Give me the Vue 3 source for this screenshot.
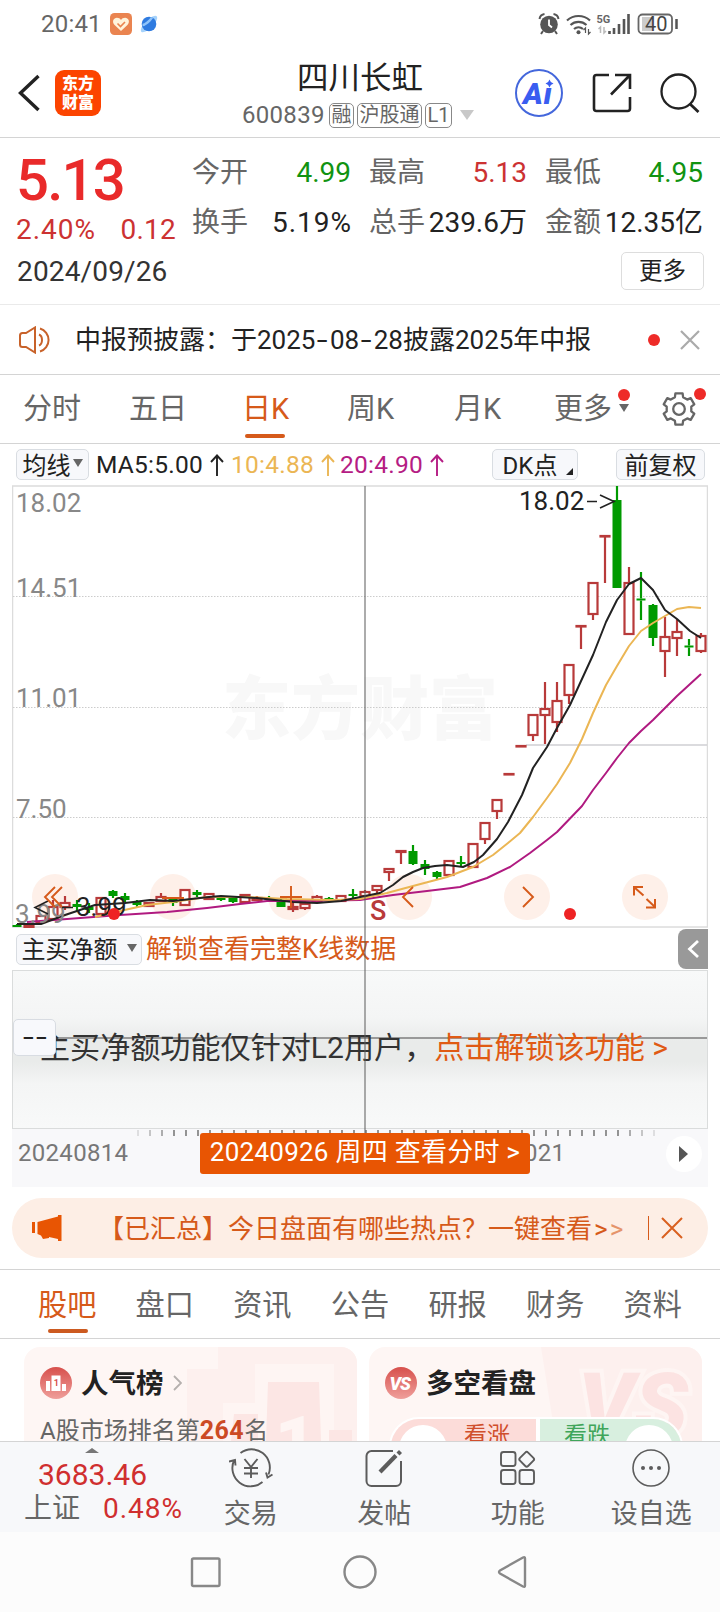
<script setup>
import { ref } from 'vue'

const quotes = [
  { label: '今开', value: '4.99', tone: 'down' },
  { label: '最高', value: '5.13', tone: 'up' },
  { label: '最低', value: '4.95', tone: 'down' },
  { label: '换手', value: '5.19%', tone: 'wide' },
  { label: '总手', value: '239.6万', tone: '' },
  { label: '金额', value: '12.35亿', tone: '' }
]

const averages = [
  { name: 'ma-5', text: 'MA5:5.00' },
  { name: 'ma-10', text: '10:4.88' },
  { name: 'ma-20', text: '20:4.90' }
]

const periods = ['分时', '五日', '日K', '周K', '月K']
const activePeriod = ref('日K')

const sections = ['股吧', '盘口', '资讯', '公告', '研报', '财务', '资料']
const activeSection = ref('股吧')

// x, high, body top, body bottom, low, direction (1 up, 0 down)
const candles = [
  [17, 924, 925, 927, 927, 0], [29, 923, 925, 927, 927, 1], [41, 915, 916, 922, 922, 1],
  [53, 900, 907, 919, 919, 1], [65, 896, 903, 907, 910, 1], [77, 900, 904, 907, 911, 0],
  [89, 903, 907, 910, 913, 0], [101, 897, 898, 914, 914, 1], [113, 890, 891, 896, 898, 0],
  [125, 893, 896, 900, 902, 0], [137, 900, 902, 905, 907, 0], [149, 902, 903, 906, 906, 1],
  [161, 893, 897, 901, 901, 1], [173, 897, 898, 903, 906, 0], [185, 889, 890, 905, 905, 1],
  [197, 890, 892, 895, 897, 0], [209, 893, 894, 899, 899, 1], [221, 896, 898, 900, 901, 0],
  [233, 897, 898, 902, 903, 0], [245, 894, 895, 902, 904, 1], [257, 896, 898, 900, 901, 1],
  [269, 896, 898, 900, 902, 0], [281, 899, 900, 907, 907, 0], [293, 903, 907, 909, 912, 1],
  [305, 901, 904, 908, 910, 1], [317, 895, 897, 901, 902, 1], [329, 897, 898, 900, 902, 0],
  [341, 895, 896, 901, 902, 1], [353, 889, 894, 896, 898, 0], [365, 890, 892, 896, 897, 1],
  [377, 885, 886, 890, 893, 1], [389, 868, 869, 872, 881, 1], [401, 851, 851, 852, 864, 1],
  [413, 845, 851, 864, 865, 0], [425, 860, 864, 869, 875, 0], [437, 871, 872, 877, 880, 0],
  [449, 860, 861, 875, 875, 1], [461, 856, 862, 864, 867, 0], [473, 844, 844, 867, 867, 1],
  [485, 823, 823, 839, 844, 1], [497, 800, 800, 811, 819, 1], [509, 774, 774, 774.5, 774.5, 1],
  [521, 746, 746, 746.5, 746.5, 1], [533, 715, 715, 735, 741, 1], [545, 682, 709, 715, 744, 1],
  [557, 682, 701, 722, 732, 1], [569, 665, 665, 695, 704, 1], [581, 626, 626, 626.5, 649, 1],
  [593, 583, 583, 614, 620, 1], [605, 536, 536, 536.5, 583, 1], [617, 486, 500, 588, 588, 0],
  [629, 567, 583, 634, 634, 1], [641, 572, 598.5, 600.5, 620, 0], [653, 604, 605, 638, 646, 0],
  [665, 617, 637, 651, 677, 1], [677, 619, 632, 638, 656, 1], [689, 639, 645.5, 647.5, 656, 0],
  [701, 633, 636, 651, 653, 1]
]

const ma5 = '17,924 41,924 65,915 95,905 125,903 150,900 173,901 209,897 221,896 257,898 293,902 317,903 341,901 365,896 380,893 393,885 403,877 413,872 423,868 435,866 447,865 463,867 474,862 483,855 497,839 508,822 522,795 533,768 547,747 557,728 570,705 593,655 606,622 617,600 629,584 641,578 653,590 665,610 677,619 690,631 701,638'
const ma10 = '95,917 120,911 147,905 173,902 207,897 247,897 287,899 333,900 360,899 387,893 413,886 447,877 473,867 493,855 508,843 520,833 533,817 547,798 557,784 570,763 582,739 593,713 606,685 617,666 629,646 641,631 653,623 665,616 677,609 689,607 701,608'
const ma20 = '27,922 67,919 120,915 167,912 207,908 240,904 267,901 300,901 360,900 393,895 427,891 460,887 487,878 510,867 530,853 547,840 557,832 582,806 593,790 606,773 617,758 629,743 641,731 653,720 677,696 701,674'

const buttons = [55, 173, 291, 409, 527, 645]

const ticks = Array.from({ length: 44 }, (_, i) => {
  const edge = Math.min(i, 43 - i)
  return { x: 138 + i * 12, opacity: Math.min(1, 0.25 + edge * 0.25) }
})

const gearPath = () => {
  const pts = []
  for (let i = 0; i < 6; i++) {
    const mid = -90 + i * 60
    for (const [off, r] of [[-19, 12.5], [-13, 16], [13, 16], [19, 12.5]]) {
      const a = ((mid + off) * Math.PI) / 180
      pts.push(`${(18 + r * Math.cos(a)).toFixed(1)} ${(18 + r * Math.sin(a)).toFixed(1)}`)
    }
  }
  return `M${pts.join('L')}Z`
}
</script>

<template>
  <div class="page">
    <div class="status">
      <span class="clock">20:41</span>
      <svg class="status-heart" width="22" height="22" viewBox="0 0 22 22">
        <rect width="22" height="22" rx="4.500" fill="#ea8450" />
        <path d="M11 18 4.600 12C1.500 8.500 3.600 4.700 6.900 4.700c1.800 0 3.200.9 4.100 2.300.9-1.400 2.300-2.300 4.100-2.300 3.300 0 5.400 3.800 2.300 7.300z" fill="#fff4dc" />
        <path d="m7.500 10.500 3 3 4.500-4.500" fill="none" stroke="#ea8450" stroke-width="1.600" />
      </svg>
      <svg class="status-planet" width="18" height="18" viewBox="0 0 18 18">
        <ellipse cx="9" cy="9" rx="11" ry="4" transform="rotate(-45 9 9)" fill="#a5d2fb" />
        <circle cx="9" cy="9" r="7.300" fill="#2f7be0" />
        <path d="M2.500 10C5 10 10 6 12 2.500" fill="none" stroke="#8fc4fa" stroke-width="2.500" />
      </svg>
      <div class="status-right">
        <svg width="141" height="24" viewBox="0 0 141 24">
          <circle cx="11" cy="12.500" r="8.800" fill="#555" />
          <path d="M1.500 7A6 6 0 0 1 6.500 2M20.500 7A6 6 0 0 0 15.500 2M5 19l-2 3M17 19l2 3" fill="none" stroke="#555" stroke-width="2" />
          <path d="M11 7.500v5.500l3 2.500" fill="none" stroke="#fff" stroke-width="1.800" />
          <circle cx="40.500" cy="20.300" r="2" fill="#555" />
          <g fill="none" stroke="#555" stroke-width="2.200">
            <path d="M29 8.500a17 17 0 0 1 23 0M32.500 13a12 12 0 0 1 16 0M36 17a7 7 0 0 1 9 0" />
            <path d="M47.500 21v-5l-2 2M50.500 17v5l2-2" stroke-width="1.200" />
          </g>
          <text x="58.500" y="10.500" class="net">5G</text>
          <path d="M62.500 21v-6l-2 2M66 15v6l2-2" stroke="#bbb" fill="none" stroke-width="1.500" />
          <path d="M71.500 22v-3M76 22v-6M81 22v-10M86 22V7M90.500 22V2" stroke="#555" stroke-width="2.600" fill="none" />
          <rect x="104" y="5" width="10" height="14" fill="#ccc" />
          <rect x="100.500" y="2.500" width="33.500" height="19" rx="4" fill="none" stroke="#666" stroke-width="1.800" />
          <path d="M138.500 7v10" stroke="#555" stroke-width="2.500" />
          <text x="107" y="18.500" class="battery">40</text>
        </svg>
      </div>
    </div>

    <header class="header">
      <div class="header-left">
        <svg width="22" height="38" viewBox="0 0 22 38" fill="none" stroke="#222" stroke-width="3.400"><path d="M20.500 2 2.500 19l18 17" /></svg>
        <div class="logo"><span>东方</span><span>财富</span></div>
      </div>
      <div class="header-title">
        <h1>四川长虹</h1>
        <div class="code-row">
          <span class="code">600839</span>
          <span class="tag">融</span><span class="tag">沪股通</span><span class="tag">L1</span>
          <i class="caret"></i>
        </div>
      </div>
      <div class="header-right">
        <svg width="48" height="48" viewBox="0 0 48 48">
          <circle cx="24" cy="24" r="23" fill="#fff" stroke="#4467dc" stroke-width="2" />
          <text x="8" y="34.500" class="ai">A</text>
          <text x="28.500" y="34.500" class="ai">ı</text>
          <path d="M34.500 10.500q.8 3.200 4 4-3.200.8-4 4-.8-3.200-4-4 3.200-.8 4-4z" fill="#3a5df0" />
        </svg>
        <svg width="40" height="40" viewBox="0 0 40 40" fill="none" stroke="#222" stroke-width="2.600">
          <path d="M17 2H4.500A2.500 2.500 0 0 0 2 4.500v31A2.500 2.500 0 0 0 4.500 38h31a2.500 2.500 0 0 0 2.500-2.500V24M23 2h15v14M38 2 19 21.500" />
        </svg>
        <svg width="40" height="40" viewBox="0 0 40 40" fill="none" stroke="#222" stroke-width="2.300">
          <circle cx="18.500" cy="18.500" r="17" /><path d="m29.500 30.500 9 8.500" stroke-width="2.800" />
        </svg>
      </div>
    </header>

    <section class="quote">
      <div class="quote-main">
        <div class="price">5.13</div>
        <div class="change"><span class="wide">2.40%</span><span>0.12</span></div>
        <div class="date">2024/09/26</div>
      </div>
      <div class="quote-side">
        <div class="quote-grid">
          <div v-for="q in quotes" :key="q.label" class="quote-cell">
            <span class="quote-label">{{ q.label }}</span>
            <span :class="q.tone">{{ q.value }}</span>
          </div>
        </div>
        <button class="more-btn">更多</button>
      </div>
    </section>

    <section class="notice">
      <svg width="34" height="28" viewBox="0 0 34 28" fill="none" stroke="#c8622a" stroke-width="2">
        <path d="M1 9.500Q1 7 3.500 7H7l9-5.500v25L7 21H3.500Q1 21 1 18.500zM20 8.500q3 1.200 3 5.500t-3 5.500" />
        <path d="M21 2.500a12 12 0 0 1 0 23" />
      </svg>
      <span class="notice-text">中报预披露：于2025<i class="dash">-</i>08<i class="dash">-</i>28披露2025年中报</span>
      <i class="dot"></i>
      <svg width="20" height="20" viewBox="0 0 20 20" stroke="#aaa" stroke-width="2.200"><path d="m1 1 18 18M19 1 1 19" /></svg>
    </section>

    <nav class="periods">
      <span v-for="p in periods" :key="p" class="period" :class="{ active: p === activePeriod }" @click="activePeriod = p">{{ p }}</span>
      <span class="period more">更多<i class="dot"></i><i class="caret-sm"></i></span>
      <span class="gear">
        <svg width="36" height="36" viewBox="0 0 36 36" fill="none" stroke="#666" stroke-width="2.300" stroke-linejoin="round">
          <path :d="gearPath()" /><circle cx="18" cy="18" r="5.800" />
        </svg>
        <i class="dot"></i>
      </span>
    </nav>

    <div class="chart-wrap">
      <div class="indicators">
        <span class="chip chip-ma">均线<i class="caret-sm"></i></span>
        <span v-for="m in averages" :key="m.name" class="ma" :class="m.name">
          {{ m.text }}
          <svg width="14" height="22" viewBox="0 0 14 22" fill="none" stroke="currentColor" stroke-width="1.900"><path d="M7 22V1.500M1 8l6-6.500L13 8" /></svg>
        </span>
        <span class="chip chip-dk">DK点<i class="corner"></i></span>
        <span class="chip chip-fq">前复权</span>
      </div>

      <svg class="kline" width="696" height="443" viewBox="12 485 696 443">
        <rect x="12.500" y="486" width="695" height="441" fill="#fff" stroke="#dcdcdc" stroke-width="1.500" />
        <text x="222" y="734" class="watermark">东方财富</text>
        <path d="M13 596.500H707M13 707.500H707M13 817.500H707" stroke="#ccc" stroke-dasharray="1.500 1.500" />
        <path d="M526 745H707" stroke="#cfcfd3" stroke-width="1.600" />
        <circle v-for="x in buttons" :key="x" :cx="x" cy="897" r="23" fill="#fef0e9" />

        <g v-for="c in candles" :key="c[0]" :class="c[5] ? 'candle-up' : 'candle-down'">
          <path :d="`M${c[0]} ${c[1]}V${c[2]}M${c[0]} ${c[3]}V${c[4]}`" />
          <rect :x="c[0] - 4.5" :y="c[2]" width="9" :height="c[3] - c[2]" />
        </g>

        <polyline :points="ma20" class="line" stroke="#b01a80" />
        <polyline :points="ma10" class="line" stroke="#ebb654" />
        <polyline :points="ma5" class="line" stroke="#222" />

        <g class="axis-label">
          <text x="16" y="512">18.02</text>
          <text x="16" y="597">14.51</text>
          <text x="16" y="707">11.01</text>
          <text x="16" y="818">7.50</text>
          <text x="15" y="923">3.99</text>
        </g>
        <text x="519" y="509.500" class="peak">18.02</text>
        <path d="M587 501.500h10M600 495l14 6.500-14 6.500" fill="none" stroke="#222" stroke-width="1.600" />
        <text x="76" y="915.500" class="peak">3.99</text>
        <path d="M62 907.500h11M48 901l-13 6.500 13 6.500" fill="none" stroke="#222" stroke-width="1.600" />
        <text x="370" y="919.500" class="sell">S</text>

        <g fill="none" stroke="#d65a1a" stroke-width="1.900">
          <path d="m55 887-10 10 10 10M62 887l-10 10 10 10" />
          <path d="M162 898h22M280 897h22M291 886v22" />
          <path d="m413 887-10 10 10 10M523 887l10 10-10 10" />
          <path d="M634 895.500V887h9M634.500 887.500l9 8M655 899v8.500h-9M655 907l-8.500-8" stroke-width="2" />
        </g>
        <circle cx="114" cy="914" r="6" fill="#ee2324" />
        <circle cx="570" cy="914" r="6" fill="#ee2324" />
      </svg>

      <div class="sub-head">
        <span class="chip chip-sub">主买净额<i class="caret-sm"></i></span>
        <span class="unlock">解锁查看完整K线数据</span>
        <span class="drawer">
          <svg width="12" height="20" viewBox="0 0 12 20" fill="none" stroke="#fff" stroke-width="2.800"><path d="m11 2-8.500 8 8.500 8" /></svg>
        </span>
      </div>

      <div class="sub-panel">
        <span class="sub-text">主买净额功能仅针对L2用户，<em>点击解锁该功能 &gt;</em></span>
        <span class="sub-tip"><i class="dash">-</i><i class="dash">-</i></span>
      </div>

      <div class="time-axis">
        <svg class="ticks" width="696" height="8" viewBox="12 0 696 8">
          <path v-for="t in ticks" :key="t.x" :d="`M${t.x} 1v6`" :stroke-opacity="t.opacity" stroke="#888" stroke-width="1.800" />
        </svg>
        <span class="axis-date">20240814</span>
        <span class="axis-date axis-date-end">021</span>
        <span class="time-pop">20240926 周四 查看分时 &gt;</span>
        <span class="play"></span>
      </div>
      <i class="crosshair"></i>
    </div>

    <div class="banner">
      <svg width="32" height="28" viewBox="0 0 32 28" fill="#e85503">
        <path d="M1 8h3v11H1zM6.500 8 27 2.500V1h3.500v26H27v-2l-9-2v1l-6 1-2-3.500L6.500 20z" />
      </svg>
      <span class="banner-text">【已汇总】今日盘面有哪些热点？一键查看<em>&gt;</em><em class="fade">&gt;</em></span>
      <i class="banner-line"></i>
      <svg width="22" height="22" viewBox="0 0 22 22" stroke="#d9601f" stroke-width="2"><path d="m1 1 20 20M21 1 1 21" /></svg>
    </div>

    <nav class="sections">
      <span v-for="s in sections" :key="s" class="section" :class="{ active: s === activeSection }" @click="activeSection = s">{{ s }}</span>
    </nav>

    <div class="cards">
      <div class="card">
        <svg class="card-bg" width="170" height="94" viewBox="0 0 170 94">
          <path d="M31 0h139v94H0V22h31z" fill="#fdf0ee" />
          <path d="M68 17h79v77H36V56h32z" fill="#fef5f3" />
          <path d="M81 35h51l2 59H79zM47 67h24v27H44zM142 83h23v11h-23z" fill="#fce6e4" />
          <text x="88" y="119" class="card-one">1</text>
        </svg>
        <div class="card-head">
          <svg width="32" height="32" viewBox="0 0 32 32">
            <defs><linearGradient id="badge" x2="0" y2="1"><stop stop-color="#d7504c" /><stop offset="1" stop-color="#ef9f9b" /></linearGradient></defs>
            <circle cx="16" cy="16" r="16" fill="url(#badge)" />
            <path d="M6 14h4v10H6zM11.500 8.500h9V24h-9zM22 17h4v7h-4z" fill="#fff" />
            <text x="13.700" y="19" class="badge-one">1</text>
          </svg>
          <span>人气榜</span>
          <svg width="9" height="16" viewBox="0 0 9 16" fill="none" stroke="#b5b0ae" stroke-width="1.800"><path d="m1 1 7 7-7 7" /></svg>
        </div>
        <p class="rank">A股市场排名第<b>264</b>名</p>
      </div>
      <div class="card">
        <svg class="card-bg" width="170" height="94" viewBox="0 0 170 94">
          <path d="M9 0h161v94H24Z" fill="#fdf0ee" />
          <text x="46" y="89" class="card-vs">VS</text>
        </svg>
        <div class="card-head">
          <svg width="32" height="32" viewBox="0 0 32 32">
            <circle cx="16" cy="16" r="16" fill="url(#badge)" />
            <text x="4.500" y="22.500" class="badge-vs">VS</text>
          </svg>
          <span>多空看盘</span>
        </div>
        <div class="vote">
          <span class="vote-up">看涨</span>
          <span class="vote-down">看跌</span>
        </div>
      </div>
    </div>

    <footer class="bottom">
      <div class="index">
        <i class="index-caret"></i>
        <div class="index-value">3683.46</div>
        <div class="index-row"><span>上证</span><em class="wide">0.48%</em></div>
      </div>
      <div class="tool">
        <svg width="44" height="40" viewBox="0 0 44 40" fill="none" stroke="#5c5c5c" stroke-width="1.900">
          <path d="M11.500 5A18.300 18.300 0 0 1 39.500 26.500M33.500 34A18.300 18.300 0 0 1 5 12.500M0 13.500l6-1.500.5 5.500M37 24.500l1.500 5 5-3" />
          <path d="m15.500 11 6.500 8 6.500-8M22 19v11M15 20h14M15 25.500h14" />
        </svg>
        <span>交易</span>
      </div>
      <div class="tool">
        <svg width="40" height="40" viewBox="0 0 40 40" fill="none" stroke="#5c5c5c" stroke-width="2">
          <path d="M29 3H7.500A5 5 0 0 0 2.500 8v25a5 5 0 0 0 5 5H32a5 5 0 0 0 5-5V13" />
          <path d="M16 24 32 7.500" stroke-width="4.200" /><path d="m34 6 2.500-2.500" stroke-width="4.200" />
        </svg>
        <span>发帖</span>
      </div>
      <div class="tool">
        <svg width="40" height="40" viewBox="0 0 40 40" fill="none" stroke="#5c5c5c" stroke-width="1.900">
          <rect x="3" y="4" width="14.500" height="14" rx="2.500" /><rect x="3" y="22" width="14.500" height="14" rx="2.500" />
          <rect x="21.500" y="22" width="14.500" height="14" rx="2.500" /><rect x="23" y="5.500" width="11.500" height="11.500" rx="2" transform="rotate(45 28.700 11.200)" />
        </svg>
        <span>功能</span>
      </div>
      <div class="tool">
        <svg width="40" height="40" viewBox="0 0 40 40" fill="none" stroke="#5c5c5c" stroke-width="1.600">
          <circle cx="20" cy="20" r="18" />
          <g fill="#5c5c5c" stroke="none"><circle cx="12" cy="20" r="2" /><circle cx="20" cy="20" r="2" /><circle cx="28" cy="20" r="2" /></g>
        </svg>
        <span>设自选</span>
      </div>
    </footer>

    <div class="system-nav">
      <svg width="34" height="34" viewBox="0 0 34 34"><rect x="3" y="3.500" width="27.500" height="27.500" rx="1.500" /></svg>
      <svg width="34" height="34" viewBox="0 0 34 34"><circle cx="17" cy="17" r="15.500" /></svg>
      <svg width="34" height="34" viewBox="0 0 34 34"><path d="M28 3.500v27q0 2-2 1L3 18.500q-2-1.500 0-3L26 2.500q2-1 2 1z" /></svg>
    </div>
  </div>
</template>

<style>
body {
  margin: 0;
  background: #fff;
}
</style>

<style scoped>
.page {
  width: 720px;
  height: 1612px;
  overflow: hidden;
  display: flex;
  flex-direction: column;
  background: #fff;
  color: #222;
  font-family: Roboto, "Noto Sans CJK SC", sans-serif;
  font-weight: 400;
}

.page * {
  box-sizing: border-box;
}

.page svg {
  display: block;
  flex: none;
}

em {
  font-style: normal;
}

.wide {
  letter-spacing: 1px;
  margin-right: -1px;
}

.dash {
  display: inline-block;
  width: 14.500px;
  text-align: center;
  font-style: normal;
  transform: scaleX(1.5);
}

.status {
  height: 48px;
  flex: none;
  display: flex;
  align-items: center;
  padding: 0 41px 0 41px;
}

.clock {
  width: 69px;
  font-size: 24px;
  letter-spacing: 0.200px;
  color: #666;
}

.status-planet {
  margin-left: 8px;
  overflow: visible;
}

.status-right {
  margin-left: auto;
}

.net {
  font: 700 11px Roboto;
  fill: #666;
}

.battery {
  font: 20px Roboto;
  fill: #444;
}

.header {
  height: 90px;
  flex: none;
  display: flex;
  align-items: center;
  border-bottom: 1px solid #d4d4d4;
  padding: 0 20px 0 18px;
}

.header-left {
  display: flex;
  align-items: center;
  gap: 15px;
  width: 224px;
}

.logo {
  width: 46px;
  height: 46px;
  border-radius: 9px;
  background: #fc4400;
  color: #fff;
  display: flex;
  flex-direction: column;
  justify-content: center;
  align-items: center;
  font-size: 16px;
  font-weight: 900;
  line-height: 19px;
}

.header-title {
  width: 236px;
}

h1 {
  margin: 5px 0 0;
  text-align: center;
  font-size: 31.500px;
  font-weight: 400;
  line-height: 38px;
}

.code-row {
  display: flex;
  align-items: center;
  gap: 3px;
  height: 30px;
  color: #666;
  margin-top: 2px;
}

.code {
  font-size: 24px;
  letter-spacing: 0.300px;
  width: 84px;
}

.tag {
  height: 25px;
  border: 1px solid #888;
  border-radius: 5px;
  padding: 0 1.500px;
  font-size: 20px;
  line-height: 22px;
}

.caret {
  border: 7px solid transparent;
  border-top: 10px solid #c8c8c8;
  border-bottom: 0;
  margin-left: 5px;
}

.header-right {
  display: flex;
  align-items: center;
  margin-left: auto;
  gap: 28.500px;
}

.ai {
  font: italic 900 30px Roboto;
  fill: #3a5df0;
}

.quote {
  height: 167px;
  flex: none;
  display: flex;
  border-bottom: 1px solid #eaeaea;
  padding: 10px 16px 0;
}

.quote-main {
  width: 176px;
}

.price {
  height: 63px;
  line-height: 64px;
  font-size: 58px;
  font-weight: 500;
  letter-spacing: -1.800px;
  color: #e92a2a;
}

.change {
  display: flex;
  justify-content: space-between;
  width: 160px;
  height: 38px;
  line-height: 38px;
  font-size: 28px;
  letter-spacing: 0.200px;
  color: #cc3232;
}

.date {
  height: 46px;
  line-height: 46px;
  padding-left: 1px;
  font-size: 28px;
  letter-spacing: 0.150px;
  white-space: nowrap;
  color: #333;
}

.quote-side {
  flex: 1;
  display: flex;
  flex-direction: column;
  align-items: flex-end;
}

.quote-grid {
  width: 100%;
  display: grid;
  grid-template-columns: 159px 158px 158px;
  column-gap: 18px;
  grid-auto-rows: 50px;
}

.quote-cell {
  display: flex;
  justify-content: space-between;
  align-items: center;
  font-size: 28px;
  white-space: nowrap;
  line-height: 50px;
  color: #222;
}

.quote-label {
  color: #666;
}

.up {
  color: #cc3232;
}

.down {
  color: #119311;
}

.more-btn {
  width: 83px;
  height: 38px;
  margin-top: 4px;
  border: 1px solid #ddd;
  border-radius: 5px;
  background: #fff;
  padding: 0;
  font: 23.500px/33px Roboto, "Noto Sans CJK SC", sans-serif;
  color: #222;
}

.notice {
  height: 70px;
  flex: none;
  display: flex;
  align-items: center;
  border-bottom: 1px solid #d4d4d4;
  padding: 0 20px 0 19px;
}

.notice-text {
  margin: -4px 0 0 22px;
  font-size: 26px;
  white-space: nowrap;
}

.dot {
  width: 12px;
  height: 12px;
  border-radius: 50%;
  background: #ee2b28;
}

.notice .dot {
  margin-left: auto;
  margin-right: 20px;
}

.periods {
  height: 69px;
  flex: none;
  display: flex;
  align-items: center;
  border-bottom: 1px solid #d4d4d4;
  padding-left: 23px;
  font-size: 29px;
  color: #666;
}

.period {
  position: relative;
  width: 107px;
  line-height: 72px;
}

.period:nth-child(1) {
  width: 106px;
}

.period:nth-child(2) {
  width: 113px;
}

.period:nth-child(3) {
  width: 105px;
}

.period:nth-child(5) {
  width: 100px;
}

.period.active,
.section.active {
  color: #d65a1a;
}

.period.active::after {
  content: '';
  position: absolute;
  left: 3px;
  bottom: 7px;
  width: 40px;
  height: 4px;
  border-radius: 2px;
  background: #d65a1a;
}

.caret-sm {
  display: inline-block;
  border: 5px solid transparent;
  border-top: 8px solid #666;
  border-bottom: 0;
}

.period.more .dot {
  position: absolute;
  left: 64px;
  top: 16px;
}

.period.more .caret-sm {
  position: absolute;
  left: 65px;
  top: 31px;
}

.gear {
  position: relative;
}

.gear .dot {
  position: absolute;
  left: 33px;
  top: -3px;
}

.chart-wrap {
  position: relative;
  flex: none;
  height: 743px;
  padding: 0 12px;
}

.indicators {
  height: 41px;
  display: flex;
  align-items: center;
  padding: 0 3px 0 4px;
  font-size: 24.500px;
  white-space: nowrap;
}

.chip {
  height: 31px;
  display: inline-flex;
  align-items: center;
  justify-content: center;
  padding-bottom: 3px;
  background: #f7f8fb;
  border: 1px solid #d9dde2;
  border-radius: 5px;
  font-size: 24px;
  color: #222;
  flex: none;
}

.chip-ma {
  width: 73px;
  gap: 2px;
  margin-right: 7px;
}

.ma {
  display: flex;
  align-items: center;
  width: 135px;
  letter-spacing: 0.250px;
}

.ma svg {
  margin-left: auto;
  margin-right: 7px;
}

.ma-10 {
  width: 109px;
  color: #ebb654;
}

.ma-20 {
  width: 109px;
  color: #b51c84;
}

.ma-10 svg,
.ma-20 svg {
  margin-right: 5px;
}

.chip-dk {
  width: 86px;
  margin-left: auto;
  padding-right: 10px;
  position: relative;
}

.corner {
  position: absolute;
  right: 4px;
  bottom: 4px;
  border-left: 7px solid transparent;
  border-bottom: 7px solid #222;
}

.chip-fq {
  width: 89px;
  margin-left: 38px;
}

.watermark {
  font: 900 69px "Noto Sans CJK SC";
  fill: #f8f8f8;
}

.candle-up path,
.candle-down path {
  stroke-width: 2.200;
  fill: none;
}

.candle-up path {
  stroke: #b83a3a;
}

.candle-down path {
  stroke: #009a00;
}

.candle-up rect {
  fill: #fff;
  stroke: #b83a3a;
  stroke-width: 2.200;
}

.candle-down rect {
  fill: #009a00;
}

.line {
  fill: none;
  stroke-width: 2;
  stroke-linejoin: round;
}

.axis-label text {
  font: 26px Roboto;
  fill: #888;
}

.peak {
  font: 26px Roboto;
  fill: #222;
}

.sell {
  font: 500 27px Roboto;
  fill: #b83a3a;
}

.sub-head {
  height: 42px;
  display: flex;
  align-items: center;
  padding-left: 4px;
}

.chip-sub {
  width: 126px;
  gap: 9px;
}

.unlock {
  margin: -5px 0 0 4px;
  font-size: 26px;
  color: #d65a1a;
}

.drawer {
  width: 30px;
  height: 40px;
  margin-left: auto;
  border-radius: 8px 0 0 8px;
  background: #999;
  display: flex;
  align-items: center;
  justify-content: center;
}

.sub-panel {
  position: relative;
  height: 159px;
  border: 1px solid #dadcdc;
  background: linear-gradient(#f8f9f9 0%, #f4f5f5 30%, #e9ebea 45%, #e9ebea 58%, #f4f5f5 72%, #f8f9f9 100%);
  white-space: nowrap;
}

.sub-panel::before {
  content: '';
  position: absolute;
  left: 0;
  right: 0;
  top: 66px;
  height: 2px;
  background: #999;
}

.sub-text {
  position: relative;
  display: block;
  margin-left: 27px;
  line-height: 154px;
  font-size: 30.100px;
  color: #333;
}

.sub-text em {
  color: #e05a14;
}

.sub-tip {
  position: absolute;
  left: 0;
  top: 48px;
  width: 43px;
  height: 37px;
  display: flex;
  justify-content: center;
  background: #f8f9fc;
  border: 1px solid #d8dce2;
  border-radius: 5px;
  font-size: 26px;
  line-height: 34px;
}

.sub-tip .dash {
  width: 13px;
}

.time-axis {
  position: relative;
  height: 58px;
  padding-left: 6px;
  background: #f8f8fa;
  font-size: 24px;
  line-height: 49px;
}

.ticks {
  position: absolute;
  left: 0;
  top: 0;
}

.axis-date {
  color: #777;
  letter-spacing: 0.300px;
}

.axis-date-end {
  position: absolute;
  left: 512px;
}

.time-pop {
  position: absolute;
  z-index: 2;
  left: 188px;
  top: 4px;
  width: 330px;
  height: 41px;
  border-radius: 3px;
  background: #e85503;
  color: #fff;
  font-size: 26px;
  letter-spacing: 0.250px;
  line-height: 39px;
  text-align: center;
  white-space: nowrap;
}

.play {
  position: absolute;
  left: 654px;
  top: 7px;
  width: 36px;
  height: 36px;
  border-radius: 50%;
  background: #fff;
}

.play::after {
  content: '';
  position: absolute;
  left: 13px;
  top: 10px;
  border: 8px solid transparent;
  border-left: 9px solid #555;
  border-right: 0;
}

.crosshair {
  position: absolute;
  left: 364px;
  top: 42px;
  width: 2px;
  height: 647px;
  background: rgba(90, 90, 90, 0.5);
}

.banner {
  flex: none;
  height: 60px;
  margin: 11px 12px;
  border-radius: 30px;
  background: #fdeee5;
  display: flex;
  align-items: center;
  padding: 0 25px 0 19px;
  color: #d65a1a;
}

.banner-text {
  margin: -4px 0 0 35px;
  font-size: 26px;
  white-space: nowrap;
}

.banner-text em {
  margin-left: 2px;
}

.banner-text .fade {
  opacity: 0.6;
}

.banner-line {
  width: 1px;
  height: 24px;
  margin-left: auto;
  margin-right: 12px;
  background: #d65a1a;
}

.sections {
  flex: none;
  height: 70px;
  border-top: 1px solid #d4d4d4;
  border-bottom: 1px solid #d4d4d4;
  display: flex;
  justify-content: space-between;
  padding: 0 38px 0 38px;
  font-size: 29.200px;
  line-height: 71px;
  color: #666;
}

.section {
  position: relative;
}

.section.active::after {
  content: '';
  position: absolute;
  left: 10px;
  bottom: 5px;
  width: 40px;
  height: 4px;
  border-radius: 2px;
  background: #cc5a20;
}

.cards {
  flex: none;
  height: 102px;
  overflow: hidden;
  display: flex;
  gap: 12px;
  padding: 8px 18px 0 24px;
}

.card {
  position: relative;
  overflow: hidden;
  width: 333px;
  height: 140px;
  flex: none;
  border-radius: 16px;
  background: #fef6f4;
  padding: 18px 16px 0;
}

.card-bg {
  position: absolute;
  right: 0;
  top: 0;
}

.card-one {
  font: 900 70px Roboto;
  fill: #fef5f3;
}

.card-vs {
  font: italic 900 88px Roboto;
  fill: #fce3e2;
  stroke: #fef5f3;
  stroke-width: 8px;
  paint-order: stroke;
}

.badge-one {
  font: 700 9px Roboto;
  fill: #d7504c;
}

.badge-vs {
  font: italic 900 18px Roboto;
  fill: #fff;
  letter-spacing: -1px;
}

.card-head {
  position: relative;
  display: flex;
  align-items: center;
  gap: 9px;
  height: 36px;
  font-size: 27.500px;
  font-weight: 700;
}

.card-head span {
  margin-top: -4px;
}

.rank {
  position: relative;
  margin: 11px 0 0;
  font-size: 24px;
  line-height: 38px;
  color: #666;
}

.rank b {
  color: #cc4a24;
  font-size: 25px;
  letter-spacing: 0.500px;
}

.vote {
  position: relative;
  display: flex;
  width: 294px;
  height: 60px;
  margin: 16px 0 0 4px;
  border: 2px solid #fff;
  border-radius: 30px;
  overflow: hidden;
  font-size: 23px;
  line-height: 34px;
}

.vote span {
  position: relative;
}

.vote span::before {
  content: '';
  position: absolute;
  top: 6px;
  left: 8px;
  width: 48px;
  height: 48px;
  border-radius: 50%;
  background: #fff;
}

.vote-up {
  width: 145px;
  background: #fcdcd9;
  color: #d04e2c;
  padding-left: 73px;
}

.vote-down {
  flex: 1;
  border-left: 4px solid #fff;
  background: #d8efdf;
  color: #3fa55a;
  padding-left: 24px;
}

.vote .vote-down::before {
  left: auto;
  right: 8px;
}

.bottom {
  flex: none;
  height: 91px;
  border-top: 1px solid #d4d4d4;
  background: #f7f8fa;
  display: flex;
  color: #666;
}

.index {
  position: relative;
  width: 184px;
  padding: 16px 0 0 24px;
}

.index-caret {
  position: absolute;
  left: 85px;
  top: 6px;
  border: 7px solid transparent;
  border-bottom: 5px solid #777;
  border-top: 0;
}

.index-value {
  padding-left: 14px;
  font-size: 30px;
  line-height: 34px;
  color: #d02f2f;
}

.index-row {
  display: flex;
  justify-content: space-between;
  width: 158px;
  font-size: 28px;
  line-height: 34px;
}

.index-row em {
  color: #d02f2f;
}

.tool {
  width: 133.500px;
  display: flex;
  flex-direction: column;
  align-items: center;
  padding-top: 6px;
  font-size: 27px;
}

.tool span {
  line-height: 34px;
  margin-top: 9px;
}

.system-nav {
  flex: 1;
  background: #fcfcfc;
  display: flex;
  justify-content: center;
  gap: 120px;
  padding-top: 23px;
}

.system-nav svg {
  fill: none;
  stroke: #888;
  stroke-width: 2.400;
}
</style>
